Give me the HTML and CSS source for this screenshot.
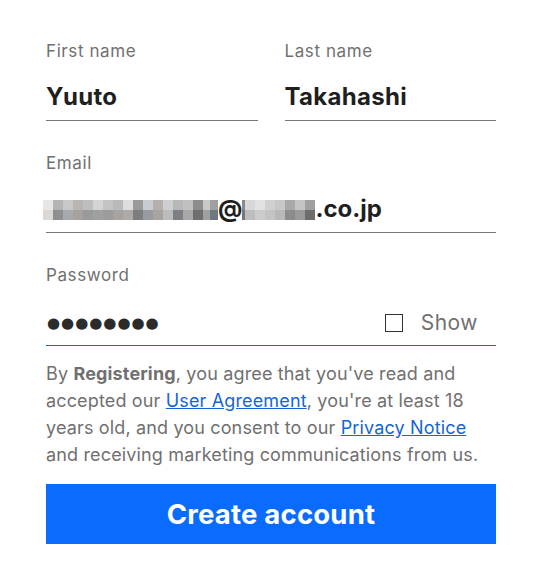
FILE: index.html
```html
<!DOCTYPE html>
<html lang="en">
<head>
<meta charset="utf-8">
<title>Create account</title>
<link rel="stylesheet" href="styles.css">
</head>
<body>
<form class="form">
  <div class="row">
    <div class="field">
      <label class="label">First name</label>
      <div class="input"><span class="value">Yuuto</span></div>
    </div>
    <div class="field">
      <label class="label">Last name</label>
      <div class="input"><span class="value">Takahashi</span></div>
    </div>
  </div>
  <div class="field">
    <label class="label">Email</label>
    <div class="input"><span class="value email"><span class="mosaic mosaic-user"></span><span class="mosaic mosaic-tail"></span>@<span class="mosaic mosaic-domain"></span>.co.jp</span></div>
  </div>
  <div class="field field-last">
    <label class="label">Password</label>
    <div class="input input-password">
      <span class="dots">●●●●●●●●</span>
      <span class="show"><span class="checkbox"></span><span class="show-text">Show</span></span>
    </div>
  </div>
  <p class="legal">By <b>Registering</b>, you agree that you've read and accepted our <a href="#" class="link">User Agreement</a>, you're at least 18 years old, and you consent to our <a href="#" class="link">Privacy Notice</a> and receiving marketing communications from us.</p>
  <button type="button" class="btn">Create account</button>
</form>
</body>
</html>
```
FILE: styles.css
```css
* { box-sizing: border-box; }
html, body { margin: 0; background: #ffffff; }
body {
  font-family: Inter, "Open Sans", "Liberation Sans", sans-serif;
  color: #222222;
}
.form {
  width: 450px;
  margin-left: 46px;
  padding-top: 41px;
  display: flex;
  flex-direction: column;
}
.row {
  display: flex;
  gap: 27px;
}
.row .field { flex: 1; }
.field { margin-bottom: 32px; }
.field-last { margin-bottom: 0; }
.label {
  display: block;
  font-size: 17px;
  line-height: 20px;
  letter-spacing: 0.6px;
  color: #707070;
}
.input {
  height: 60px;
  border-bottom: 1px solid #767676;
  display: flex;
  align-items: flex-end;
  padding-bottom: 8px;
}
.value {
  font-size: 24px;
  font-weight: 700;
  line-height: 30px;
  letter-spacing: 0.3px;
  color: #1f1f1f;
}
.email { display: flex; align-items: center; letter-spacing: 0; }
.mosaic {
  display: inline-block;
  height: 20px;
  background-repeat: no-repeat;
  background-size: 100% 10px, 100% 10px;
  background-position: 0 0, 0 10px;
  margin-top: 2px;
}
.mosaic-user {
  width: 167px;
  margin-left: -3px;
  background-image:
    linear-gradient(to right, #e6e6e6 0 10px, #b4b4b4 10px 20px, #c8c8c8 20px 30px, #b9b5b3 30px 40px, #bebebe 40px 50px, #d4d4d6 50px 60px, #c3c3c3 60px 70px, #bababa 70px 80px, #dedede 80px 90px, #9a9a9a 90px 100px, #c8ccd2 100px 110px, #b5b0ac 110px 120px, #cfcfd2 120px 130px, #b8b8b8 130px 140px, #c0c0c0 140px 150px, #8c8c8c 150px 160px, #c8c8c8 160px 167px),
    linear-gradient(to right, #ddd8d4 0 10px, #8f8f8f 10px 20px, #a6a9b0 20px 30px, #a8a29f 30px 40px, #9a9a9a 40px 50px, #a0a0a0 50px 60px, #9c9c9c 60px 70px, #a6a3a0 70px 80px, #b0aaa6 80px 90px, #7e7e7e 90px 100px, #989ca2 100px 110px, #a8a4a0 110px 120px, #bcbcbc 120px 130px, #7c7f84 130px 140px, #a8a8a8 140px 150px, #6e6e6e 150px 160px, #a0a0a0 160px 167px);
}
.mosaic-tail {
  width: 8px;
  background-image:
    linear-gradient(#a0a0a0, #a0a0a0),
    linear-gradient(#6e7884, #6e7884);
}
.mosaic-domain {
  width: 73px;
  background-image:
    linear-gradient(to right, #8a8a8a 0 3px, #d8d8d8 3px 13px, #e2e2e2 13px 23px, #d0d0d0 23px 33px, #c8c8c8 33px 43px, #a8a8a8 43px 53px, #c4c4c4 53px 63px, #a0a0a0 63px 73px),
    linear-gradient(to right, #777777 0 3px, #bdbdbd 3px 13px, #cccccc 13px 23px, #c4c4c4 23px 33px, #b8b8b8 33px 43px, #8c8c8c 43px 53px, #9a9a9a 53px 63px, #6c6c6c 63px 73px);
}
.input-password {
  height: 61px;
  border-bottom-color: #1a6a9a;
  justify-content: space-between;
  align-items: center;
  padding-top: 16px;
  padding-bottom: 0;
}
.dots {
  font-family: "DejaVu Sans", sans-serif;
  font-size: 15px;
  line-height: 20px;
  letter-spacing: 1px;
  color: #2b2b2b;
  margin-left: 1px;
}
.show {
  display: flex;
  align-items: center;
  gap: 18px;
  margin-right: 18px;
}
.checkbox {
  width: 18px;
  height: 18px;
  border: 1.5px solid #333333;
  background: #ffffff;
}
.show-text {
  font-size: 21px;
  line-height: 24px;
  letter-spacing: 0.5px;
  color: #707070;
}
.legal {
  margin: 14px 0 0;
  font-size: 18px;
  line-height: 27px;
  letter-spacing: 0.15px;
  color: #707070;
}
.legal b { font-weight: 700; }
.link {
  color: #1565d8;
  text-decoration: underline;
}
.btn {
  margin-top: 16px;
  height: 60px;
  width: 100%;
  border: none;
  background: #0a6cff;
  color: #ffffff;
  font-family: inherit;
  font-size: 27.5px;
  font-weight: 700;
  letter-spacing: 0.2px;
}
```
